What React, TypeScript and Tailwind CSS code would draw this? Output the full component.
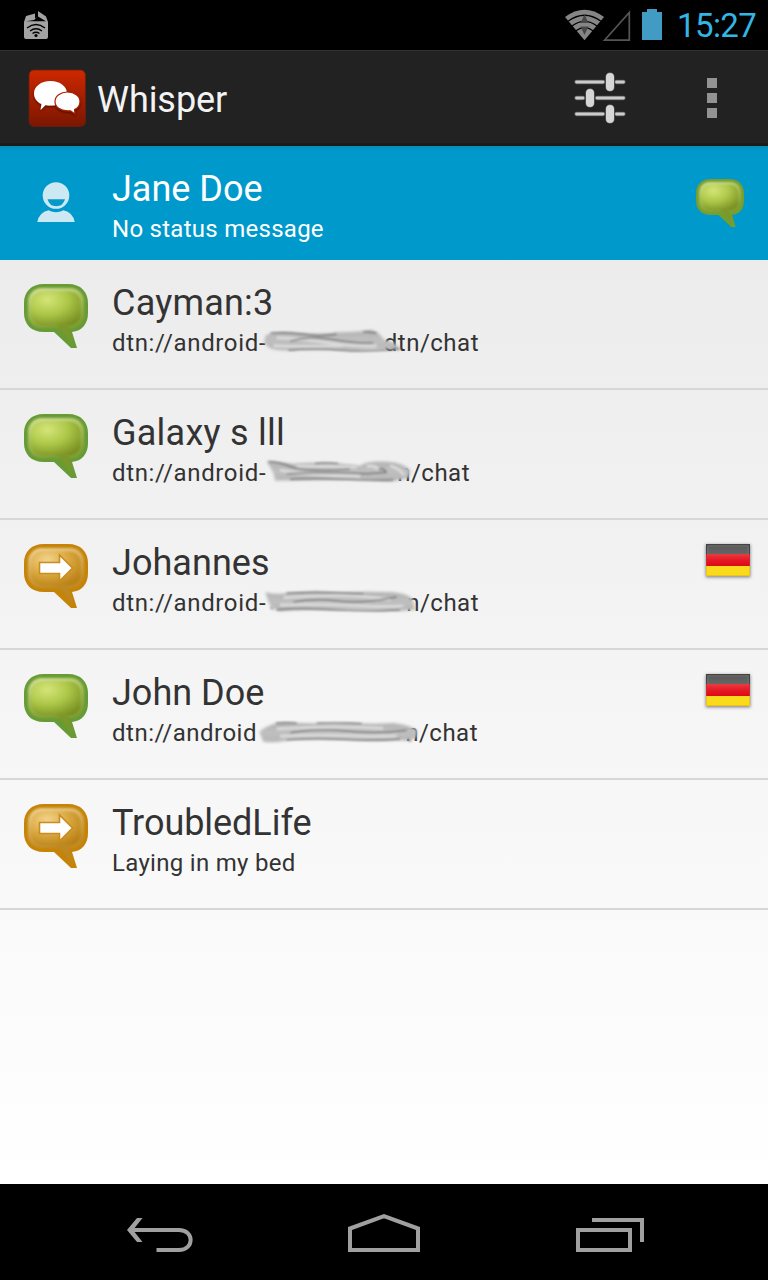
import React from "react";

type Smudge = { fill: string; dark: string[]; light: string[] };

type Contact = {
  name: string;
  nameTracking: string;
  status?: string;
  head?: string;
  tail?: string;
  width?: string;
  tone: "green" | "amber";
  flag?: boolean;
  smudge?: Smudge;
};

const contacts: Contact[] = [
  {
    name: "Cayman:3",
    nameTracking: "tracking-[0.2px]",
    head: "dtn://android-",
    tail: "dtn/chat",
    width: "w-[367px]",
    tone: "green",
    smudge: {
      fill: "M46 50Q70 36 120 40Q200 48 270 40Q330 38 362 32Q388 38 402 62Q440 68 450 92Q380 88 320 95Q230 90 150 93Q90 98 60 88L42 72Z",
      dark: ["M62 43Q110 38 160 46T260 46", "M120 66Q180 50 250 62T370 72", "M115 93Q200 86 270 93T450 89", "M340 38L380 42"],
      light: ["M80 56Q150 58 240 72T380 80", "M70 80Q150 84 280 80"],
    },
  },
  {
    name: "Galaxy s lll",
    nameTracking: "tracking-[0.25px]",
    head: "dtn://android-",
    tail: "n/chat",
    width: "w-[358px]",
    tone: "green",
    smudge: {
      fill: "M50 36Q90 40 130 44Q220 36 330 50Q350 36 410 38Q460 40 482 64L476 86Q440 98 400 97Q350 90 300 93Q190 92 76 95L70 72Z",
      dark: ["M56 38Q95 40 125 54T300 60", "M195 44Q230 40 265 44", "M110 74Q220 68 350 74L410 70", "M120 91Q200 86 300 91T430 92", "M386 62Q400 54 408 70"],
      light: ["M140 50Q200 52 320 54", "M90 64Q180 80 330 82", "M350 52Q370 48 385 60", "M420 50Q450 60 462 78"],
    },
  },
  {
    name: "Johannes",
    nameTracking: "tracking-[0.05px]",
    head: "dtn://android-",
    tail: "n/chat",
    width: "w-[367px]",
    tone: "amber",
    flag: true,
    smudge: {
      fill: "M46 40Q80 48 110 42Q190 34 270 40Q350 36 430 40Q476 44 488 62L496 92Q440 99 370 94Q300 90 240 93Q140 90 90 97Q62 90 56 70Z",
      dark: ["M110 43Q180 39 230 41T340 45", "M80 92Q150 86 220 91T390 95L450 92", "M130 70Q190 56 260 66T440 54", "M62 84L68 92"],
      light: ["M100 56Q170 50 260 50T420 62", "M90 78Q180 74 320 80T460 78"],
    },
  },
  {
    name: "John Doe",
    nameTracking: "tracking-[0px]",
    head: "dtn://android",
    tail: "n/chat",
    width: "w-[366px]",
    tone: "green",
    flag: true,
    smudge: {
      fill: "M28 68Q60 42 100 40Q200 46 300 42Q370 46 430 42Q480 48 502 64L498 86Q480 98 450 94Q380 99 300 93Q200 90 120 93Q70 104 40 98Z",
      dark: ["M78 43Q115 40 140 43", "M200 43Q270 40 335 44", "M110 92Q200 86 280 91T450 90", "M120 72Q200 56 290 66T470 64", "M475 90L482 98"],
      light: ["M80 60Q170 54 250 54T400 58", "M90 82Q200 76 300 80T440 80"],
    },
  },
  {
    name: "TroubledLife",
    nameTracking: "tracking-[-0.05px]",
    status: "Laying in my bed",
    tone: "amber",
  },
];

function Bubble({ tone, id, className }: { tone: "green" | "amber" | "lime"; id: string; className: string }) {
  const amber = tone === "amber";
  const edge = amber ? "#c58408" : tone === "lime" ? "#769e2d" : "#679b35";
  return (
    <svg viewBox="0 0 64 64" className={className}>
      <defs>
        <radialGradient id={id} cx="0.32" cy="0.24" r="0.85">
          <stop offset="0" stopColor={amber ? "#f3d48c" : "#d5e578"} />
          <stop offset="0.5" stopColor={amber ? "#dba941" : "#adc849"} />
          <stop offset="1" stopColor={amber ? "#b98015" : "#799022"} />
        </radialGradient>
        <linearGradient id={id + "r"} x1="0" y1="0" x2="0.35" y2="1">
          <stop offset="0" stopColor={amber ? "#efd597" : "#d8e39c"} />
          <stop offset="0.6" stopColor={amber ? "#d3a64c" : "#9fbb50"} />
          <stop offset="1" stopColor={amber ? "#c28d2a" : "#84a138"} />
        </linearGradient>
        <filter id={id + "b"} x="-10%" y="-10%" width="120%" height="120%">
          <feGaussianBlur stdDeviation="1.1" />
        </filter>
      </defs>
      <path d="M20 0H44C57 0 64 8 64 19V29C64 40 58 47 48 48L53 64H47L30 48H20C7 48 0 40 0 29V19C0 8 7 0 20 0Z" fill={edge} />
      <rect x="4" y="4" width="56" height="40" rx="14" fill={`url(#${id}r)`} filter={`url(#${id}b)`} />
      <rect x="7.5" y="7.5" width="49" height="34" rx="11" fill={`url(#${id})`} filter={`url(#${id}b)`} />
      <path d="M33 41L49 60L44 41Z" fill={amber ? "#bd8822" : "#7b972b"} filter={`url(#${id}b)`} />
      {amber && (
        <path d="M15.5 18.500H35.500V11L48.500 24L35.500 37V29.500H15.500Z" fill="#fff" stroke="#c98d20" strokeWidth="1.6" />
      )}
    </svg>
  );
}

function Smear({ shape, id }: { shape: Smudge; id: string }) {
  return (
    <svg viewBox="0 0 720 150" className="absolute -top-[8px] left-[138px] h-[50px] w-[240px]">
      <defs>
        <linearGradient id={id} x1="0" y1="0" x2="0" y2="1">
          <stop offset="0" stopColor="#b2b2b2" />
          <stop offset="0.5" stopColor="#bfbfbf" />
          <stop offset="1" stopColor="#b6b6b6" />
        </linearGradient>
        <filter id={id + "b"} x="-10%" y="-40%" width="120%" height="180%">
          <feGaussianBlur stdDeviation="4" />
        </filter>
        <filter id={id + "s"} x="-10%" y="-100%" width="120%" height="300%">
          <feGaussianBlur stdDeviation="3" />
        </filter>
      </defs>
      <path d={shape.fill} fill={`url(#${id})`} filter={`url(#${id}b)`} />
      <g fill="none" filter={`url(#${id}s)`}>
        {shape.light.map((d) => (
          <path key={d} d={d} stroke="#dadada" strokeWidth="9" />
        ))}
        {shape.dark.map((d) => (
          <path key={d} d={d} stroke="#666" strokeWidth="4.5" opacity="0.75" />
        ))}
      </g>
    </svg>
  );
}

function Flag({ id }: { id: string }) {
  return (
    <svg viewBox="0 0 52 42" className="mt-[20px] mr-[14px] h-[42px] w-[52px] shrink-0">
      <defs>
        <filter id={id} x="-20%" y="-20%" width="140%" height="140%">
          <feGaussianBlur stdDeviation="1.5" />
        </filter>
        <linearGradient id={id + "k"} x1="0" y1="0" x2="0" y2="1">
          <stop offset="0" stopColor="#555" />
          <stop offset="1" stopColor="#686868" />
        </linearGradient>
        <linearGradient id={id + "r"} x1="0" y1="0" x2="0" y2="1">
          <stop offset="0" stopColor="#ed3a42" />
          <stop offset="0.5" stopColor="#e31b25" />
          <stop offset="1" stopColor="#dd0815" />
        </linearGradient>
      </defs>
      <rect x="3.500" y="4.500" width="45" height="33" rx="1" fill="#555" opacity="0.65" filter={`url(#${id})`} />
      <rect x="4" y="4" width="44" height="11" fill={`url(#${id}k)`} />
      <rect x="4" y="14" width="44" height="12" fill={`url(#${id}r)`} />
      <rect x="4" y="26" width="44" height="10" fill="#fadb1b" />
      <path d="M4.500 4V14M47.500 4V14M4 4.500H48" stroke="#444" />
      <path d="M4.500 14V26M47.500 14V26" stroke="#cf2a32" />
      <path d="M4.500 26V35.500H47.500V26" stroke="#ecc31e" fill="none" />
      <path d="M6 14V6H46V14" stroke="#808080" fill="none" opacity="0.5" />
    </svg>
  );
}

function StatusBar() {
  return (
    <header className="flex h-[50px] shrink-0 items-start bg-black">
      <svg viewBox="0 0 24 28" className="mt-[11px] ml-[24px] h-[28px] w-[24px]">
        <path d="M0 11L2 5L11 2.500V7.500L14 6V0L22 5.500L24 11V26Q24 28 22 28H2Q0 28 0 26Z" fill="#a3a3a3" />
        <path d="M2 10.300L10 9L14 5.500L22 10.300Z" fill="#000" />
        <path d="M3 17Q12 10 21 17M6 20Q12 15.500 18 20M8.500 22.500Q12 20 15.500 22.500" stroke="#000" strokeWidth="1.5" fill="none" />
        <circle cx="12" cy="24.500" r="1.600" fill="#000" />
      </svg>
      <div className="flex-1" />
      <svg viewBox="0 0 66 34" className="mt-[8px] h-[34px] w-[66px]">
        <path d="M0 9Q19.500 -5.500 39 9L19.500 32.300Z" fill="#868686" />
        <path d="M3 13.300Q19.500 1.200 36 13.300M7 18Q19.500 8.700 32 18M11 22.700Q19.500 16.500 28 22.700" stroke="#000" strokeWidth="1.4" fill="none" />
        <path d="M15.500 15L19.500 6.500L23.500 15ZM15.500 18.500H23.500L19.500 27Z" fill="#484848" />
        <path d="M39.500 32.200L64.300 4.500V32.200Z" stroke="#565656" strokeWidth="1.700" fill="none" />
      </svg>
      <svg viewBox="0 0 20 31" className="mt-[9px] ml-[11px] h-[31px] w-[20px]">
        <path d="M0 3H5V0H15V3H20V31H0Z" fill="#429bc2" />
      </svg>
      <span className="mt-[5px] ml-[15px] w-[91px] text-[33px] leading-[42px] tracking-[-0.6px] text-[#33b5e5]">15:27</span>
    </header>
  );
}

function ActionBar() {
  return (
    <div className="flex h-[96px] shrink-0 items-start border-t border-b-[3px] border-t-[#323232] border-b-[#1b1b1b] bg-[#222]">
      <svg viewBox="0 0 60 60" className="mt-[17px] ml-[27px] h-[60px] w-[60px]">
        <defs>
          <linearGradient id="logo" x1="0" y1="0" x2="0" y2="1">
            <stop offset="0" stopColor="#cd2800" />
            <stop offset="1" stopColor="#7b1600" />
          </linearGradient>
          <filter id="logoShadow" x="-20%" y="-20%" width="140%" height="150%">
            <feDropShadow dx="0" dy="1" stdDeviation="1" floodOpacity="0.6" />
          </filter>
        </defs>
        <rect x="2" y="2" width="56.500" height="56.500" rx="5" fill="url(#logo)" stroke="#691e10" strokeWidth="0.8" />
        <g fill="#fff" filter="url(#logoShadow)">
          <path d="M23.500 13C33 13 40 18.500 40 25.500C40 32.500 33 37.500 25 37.500C22 37.500 20 37.500 18.500 37L13.500 42L14.500 36C10 34 7 30 7 25.500C7 18.500 14 13 23.500 13Z" />
          <path d="M40.500 24C47.500 24 53 28 53 33.500C53 37 51 40 47.500 41.500L48 46L43.500 42.800H40.500C33.500 42.800 28 39 28 33.500C28 28 33.500 24 40.500 24Z" stroke="#a82000" strokeWidth="1.2" />
        </g>
      </svg>
      <h1 className="mt-[25px] ml-[10px] text-[36px] leading-[48px] tracking-[-0.05px] text-[#f3f3f3]">Whisper</h1>
      <div className="flex-1" />
      <svg viewBox="0 0 54 54" className="mt-[20px] mr-[80px] h-[54px] w-[54px]">
        <g strokeLinecap="round">
          <path d="M3.500 11H30M43.500 11H50.500M3.500 27H10M24 27H50.500M3.500 43H30M43.500 43H50.500" stroke="#555" strokeWidth="4.500" />
          <path d="M3.500 11H30M43.500 11H50.500M3.500 27H10M24 27H50.500M3.500 43H30M43.500 43H50.500" stroke="#ccc" strokeWidth="2.800" />
          <path d="M37 6V16M17 22V32M37 38V48" stroke="#555" strokeWidth="9.500" />
          <path d="M37 6V16M17 22V32M37 38V48" stroke="#d6d6d6" strokeWidth="8" />
        </g>
      </svg>
      <div className="mt-[27px] mr-[51px] flex flex-col gap-[5px]">
        <i className="size-[10px] bg-[#939393]" />
        <i className="size-[10px] bg-[#939393]" />
        <i className="size-[10px] bg-[#939393]" />
      </div>
    </div>
  );
}

function ProfileRow() {
  return (
    <section className="flex h-[114px] shrink-0 items-start bg-[#0099cc] bg-linear-to-b from-[#078cb9] to-[#0099cc] to-[5px] text-white">
      <svg viewBox="0 0 38 42" className="mt-[35px] ml-[37px] h-[42px] w-[38px]">
        <circle cx="19" cy="14.500" r="13.300" fill="#cce9f3" />
        <path d="M10.500 18.300H28Q26 25.300 19.200 25.300Q12.500 25.300 10.500 18.300Z" fill="#0799ca" />
        <path d="M0.300 41Q2 31.500 11.500 29.300Q19 33 26.500 29.300Q36 31.500 37.700 41Z" fill="#cce9f3" />
      </svg>
      <div className="mt-[19px] ml-[37px] flex-1">
        <h2 className="text-[36px] leading-[48px]">Jane Doe</h2>
        <p className="text-[24px] leading-[32px] tracking-[0.27px]">No status message</p>
      </div>
      <Bubble tone="lime" id="own" className="mt-[33px] mr-[24px] h-[48px] w-[48px]" />
    </section>
  );
}

function ContactRow({ contact, id }: { contact: Contact; id: string }) {
  return (
    <li className="flex h-[130px] items-start border-b-2 border-[#d7d7d7]">
      <Bubble tone={contact.tone} id={id} className="mt-[24px] ml-[24px] h-[64px] w-[64px] shrink-0" />
      <div className="mt-[19px] ml-[24px] flex-1 text-[#333]">
        <h2 className={"text-[36px] leading-[48px] " + contact.nameTracking}>{contact.name}</h2>
        {contact.smudge ? (
          <p className={"relative flex justify-between text-[24px] leading-[32px] " + contact.width}>
            <span className={contact.head === "dtn://android" ? "tracking-[0.5px]" : "tracking-[0.65px]"}>{contact.head}</span>
            <span className="tracking-[0.5px]">{contact.tail}</span>
            <Smear shape={contact.smudge} id={id + "m"} />
          </p>
        ) : (
          <p className="text-[24px] leading-[32px] tracking-[0.3px]">{contact.status}</p>
        )}
      </div>
      {contact.flag && <Flag id={id + "f"} />}
    </li>
  );
}

function NavBar() {
  return (
    <nav className="flex h-[96px] shrink-0 items-start justify-between bg-black pr-[124px] pl-[125px]">
      <svg viewBox="0 0 68 40" className="mt-[31px] h-[40px] w-[68px]" fill="none" stroke="#a0a0a0" strokeWidth="4">
        <path d="M6 15H54C69.500 15 69.500 35 54 35H31.500" />
        <path d="M12 3H17.500L8 15L17.500 27H12L2 15Z" fill="#a0a0a0" stroke="none" />
      </svg>
      <svg viewBox="0 0 72 40" className="mt-[29px] mr-[1px] h-[40px] w-[72px]" fill="none" stroke="#a0a0a0" strokeWidth="4">
        <path d="M2 37V15.500L36 3.200L70 15.500V37Z" />
      </svg>
      <svg viewBox="0 0 68 38" className="mt-[33px] h-[38px] w-[68px]" fill="none" stroke="#a0a0a0" strokeWidth="4">
        <path d="M2 13H54V33H2ZM16 3H66V25" />
      </svg>
    </nav>
  );
}

export default function App() {
  return (
    <div className="flex h-[1280px] w-[768px] flex-col overflow-hidden bg-white font-[Roboto,sans-serif]">
      <StatusBar />
      <ActionBar />
      <ProfileRow />
      <main className="flex-1 bg-linear-to-b from-[#ececec] to-white">
        <ul>
          {contacts.map((contact, i) => (
            <ContactRow key={contact.name} contact={contact} id={"c" + i} />
          ))}
        </ul>
      </main>
      <NavBar />
    </div>
  );
}
